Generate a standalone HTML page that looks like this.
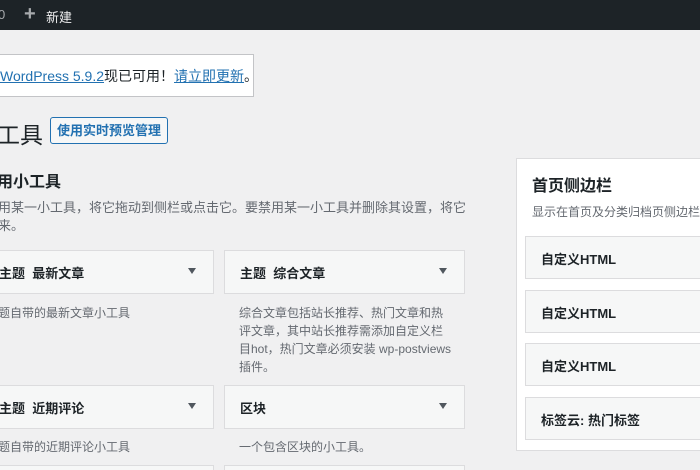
<!DOCTYPE html>
<html style="width:700px;height:470px;overflow:hidden"><head><meta charset="utf-8"><style>
*{margin:0;padding:0;box-sizing:border-box}
body{width:700px;height:470px;overflow:hidden;background:#f0f0f1;font-family:"Liberation Sans","Noto Sans CJK SC",sans-serif;color:#1d2327;position:relative}
.a{position:absolute;white-space:nowrap}
.bar{left:0;top:0;width:700px;height:30px;background:#1d2327;color:#f0f0f1;font-size:13px}
.box{position:absolute;background:#f6f7f7;border:1px solid #dcdcde}
.box span{position:absolute;top:12px;font-size:13px;font-weight:bold}
.arr{position:absolute;top:17px;width:0;height:0;border-left:4px solid transparent;border-right:4px solid transparent;border-top:6px solid #50575e}
.d{font-size:12px;color:#646970;line-height:18px}
.it{position:absolute;left:525px;width:190px;height:43px;background:#f6f7f7;border:1px solid #dcdcde}
.it span{position:absolute;left:15px;top:12px;font-size:13px;font-weight:bold}
</style></head><body>
<div class="a bar"><span class="a" style="left:-2px;top:7px;color:#a7aaad">0</span><span class="a" style="left:24px;top:3px;font-size:20px;font-weight:bold;color:#a7aaad">+</span><span class="a" style="left:46px;top:7px">新建</span></div>
<div class="a" style="left:-2px;top:54px;width:256px;height:43px;background:#fff;border:1px solid #c3c4c7;border-left:none"></div>
<div class="a" style="left:0;top:66px;font-size:14px"><span style="color:#2271b1;text-decoration:underline">WordPress 5.9.2</span>现已可用！<span style="color:#2271b1;text-decoration:underline">请立即更新</span>。</div>
<div class="a" style="left:-3px;top:116px;font-size:23px">工具</div>
<div class="a" style="left:50px;top:117px;width:118px;height:27px;border:1px solid #2271b1;border-radius:3px;background:#f6f7f7;color:#2271b1;font-size:13px;font-weight:bold;text-align:center;line-height:25px">使用实时预览管理</div>
<div class="a" style="left:-3px;top:168px;font-size:16px;font-weight:bold">用小工具</div>
<div class="a d" style="left:-2px;top:199px;font-size:13px">用某一小工具，将它拖动到侧栏或点击它。要禁用某一小工具并删除其设置，将它<br>来。</div>
<div class="box" style="left:-10px;top:250px;width:224px;height:44px"><span style="left:8px">主题&nbsp;&nbsp;最新文章</span><i class="arr" style="left:197px"></i></div>
<div class="box" style="left:224px;top:250px;width:241px;height:44px"><span style="left:15px">主题&nbsp;&nbsp;综合文章</span><i class="arr" style="left:214px"></i></div>
<div class="a d" style="left:-2px;top:304px">题自带的最新文章小工具</div>
<div class="a d" style="left:239px;top:304px">综合文章包括站长推荐、热门文章和热<br>评文章，其中站长推荐需添加自定义栏<br>目hot，热门文章必须安装 wp-postviews<br>插件。</div>
<div class="box" style="left:-10px;top:385px;width:224px;height:44px"><span style="left:8px">主题&nbsp;&nbsp;近期评论</span><i class="arr" style="left:197px"></i></div>
<div class="box" style="left:224px;top:385px;width:241px;height:44px"><span style="left:15px">区块</span><i class="arr" style="left:214px"></i></div>
<div class="a d" style="left:-2px;top:438px">题自带的近期评论小工具</div>
<div class="a d" style="left:239px;top:438px">一个包含区块的小工具。</div>
<div class="box" style="left:-10px;top:465px;width:224px;height:5px;border-bottom:none"></div>
<div class="box" style="left:224px;top:465px;width:241px;height:5px;border-bottom:none"></div>
<div class="a" style="left:516px;top:158px;width:200px;height:293px;background:#fff;border:1px solid #dcdcde"></div>
<div class="a" style="left:532px;top:172px;font-size:16px;font-weight:bold">首页侧边栏</div>
<div class="a d" style="left:532px;top:203px">显示在首页及分类归档页侧边栏</div>
<div class="it" style="top:236px"><span>自定义HTML</span></div>
<div class="it" style="top:290px"><span>自定义HTML</span></div>
<div class="it" style="top:343px"><span>自定义HTML</span></div>
<div class="it" style="top:397px"><span>标签云: 热门标签</span></div>
</body></html>
